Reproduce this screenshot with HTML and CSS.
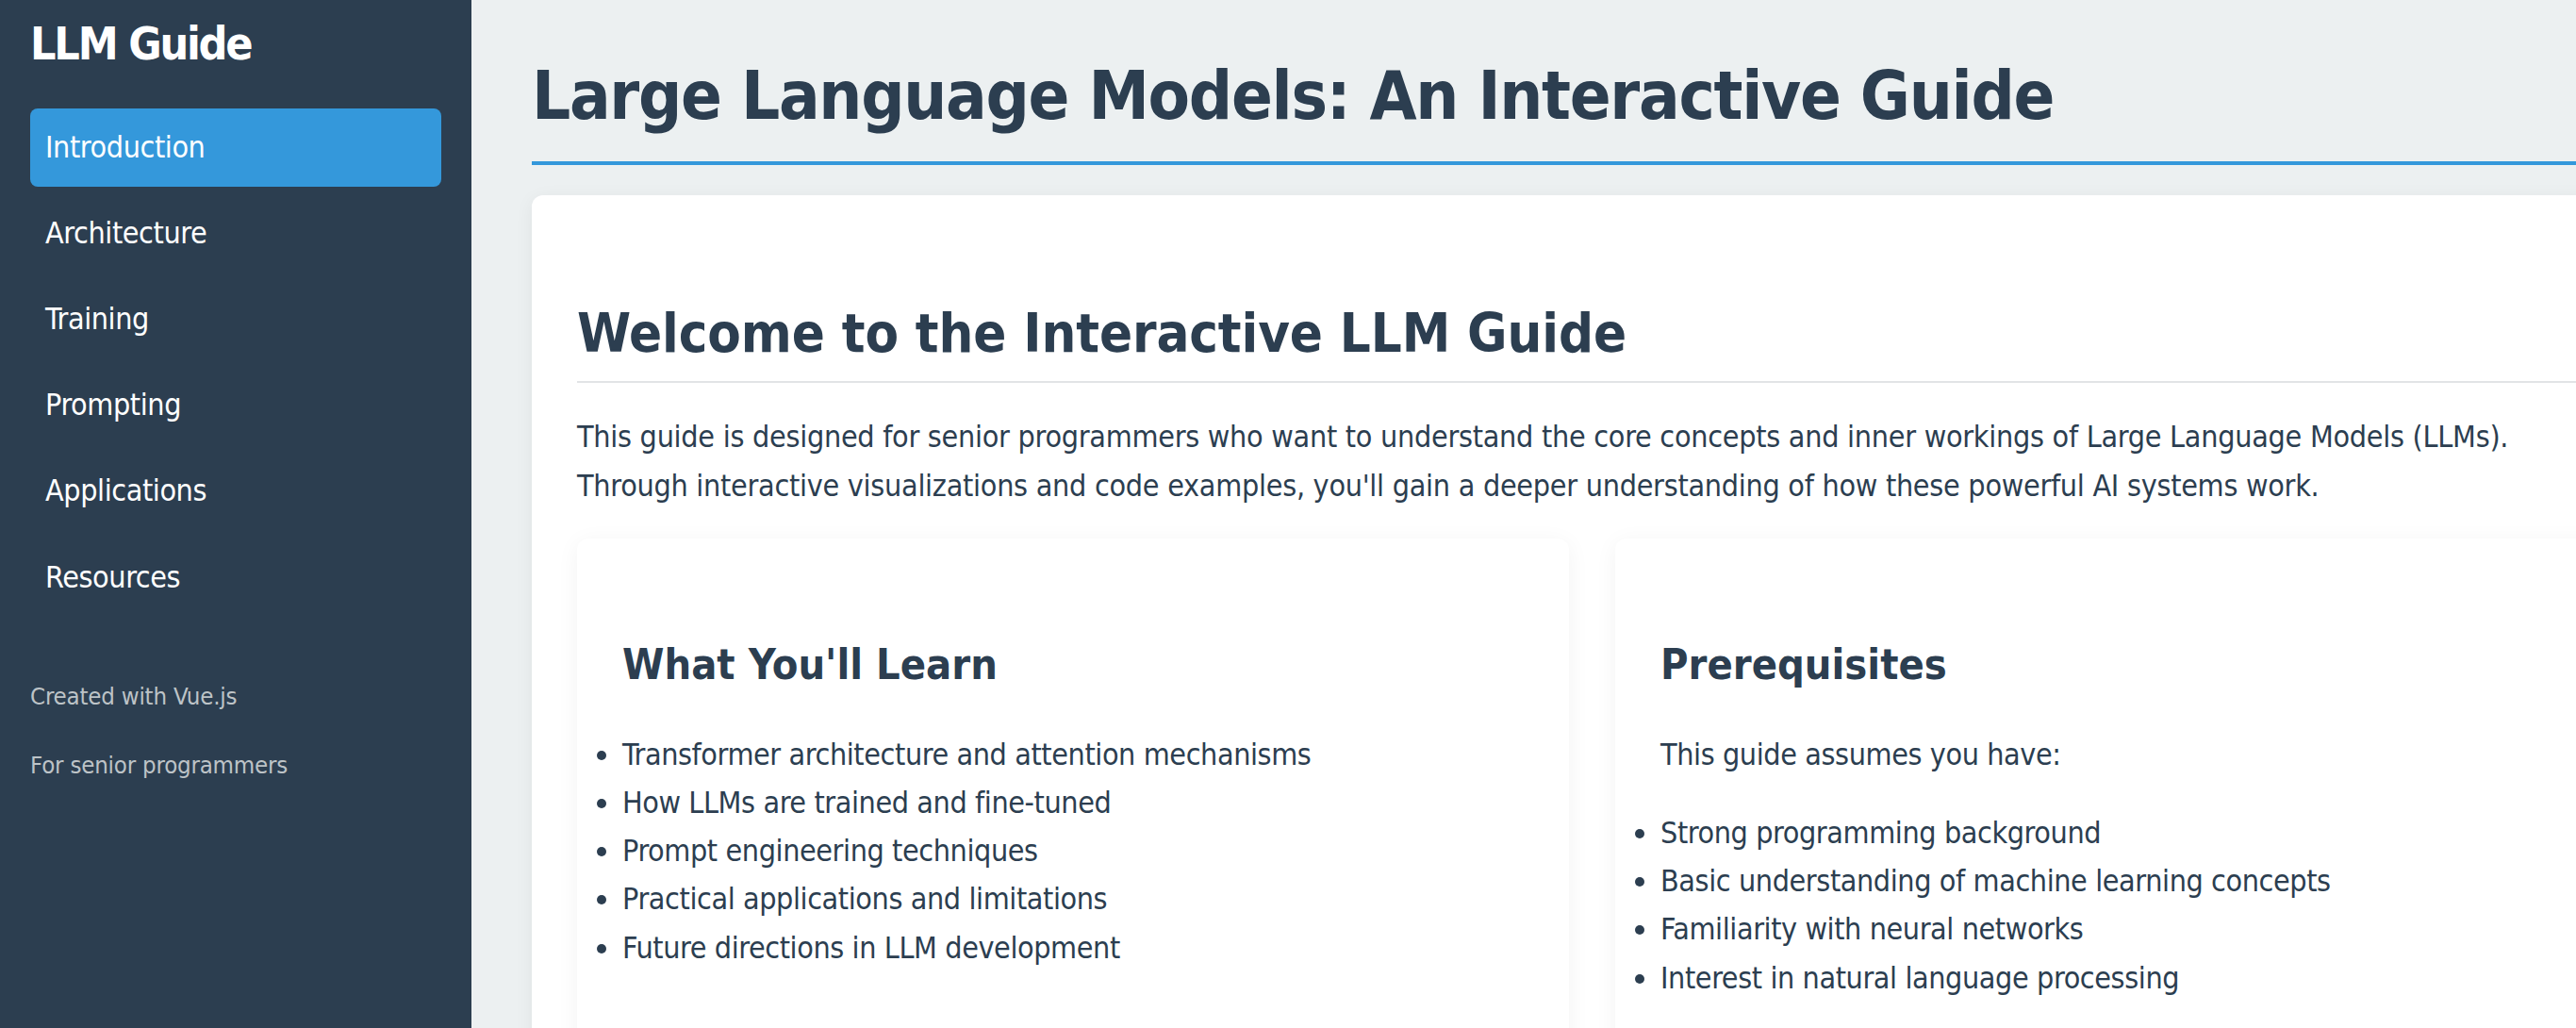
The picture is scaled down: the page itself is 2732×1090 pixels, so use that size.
FILE: index.html
```html
<!DOCTYPE html>
<html lang="en">
<head>
<meta charset="utf-8">
<title>LLM Guide</title>
<link rel="stylesheet" href="styles.css">
</head>
<body>
<div class="layout">
  <aside class="sidebar">
    <div class="logo">LLM Guide</div>
    <nav class="nav">
      <a class="nav-item active">Introduction</a>
      <a class="nav-item">Architecture</a>
      <a class="nav-item">Training</a>
      <a class="nav-item">Prompting</a>
      <a class="nav-item">Applications</a>
      <a class="nav-item">Resources</a>
    </nav>
    <div class="sidebar-footer">
      <p>Created with Vue.js</p>
      <p>For senior programmers</p>
    </div>
  </aside>
  <main class="main">
    <header class="page-header">
      <h1 class="page-title">Large Language Models: An Interactive Guide</h1>
    </header>
    <section class="section-card">
      <h2 class="section-title">Welcome to the Interactive LLM Guide</h2>
      <p class="intro">This guide is designed for senior programmers who want to understand the core concepts and inner workings of Large Language Models (LLMs). Through interactive visualizations and code examples, you'll gain a deeper understanding of how these powerful AI systems work.</p>
      <div class="feature-grid">
        <div class="feature-card">
          <h3 class="feature-title">What You'll Learn</h3>
          <ul class="feature-list">
            <li>Transformer architecture and attention mechanisms</li>
            <li>How LLMs are trained and fine-tuned</li>
            <li>Prompt engineering techniques</li>
            <li>Practical applications and limitations</li>
            <li>Future directions in LLM development</li>
          </ul>
        </div>
        <div class="feature-card">
          <h3 class="feature-title">Prerequisites</h3>
          <p class="feature-text">This guide assumes you have:</p>
          <ul class="feature-list">
            <li>Strong programming background</li>
            <li>Basic understanding of machine learning concepts</li>
            <li>Familiarity with neural networks</li>
            <li>Interest in natural language processing</li>
          </ul>
        </div>
      </div>
    </section>
  </main>
</div>
</body>
</html>
```

FILE: styles.css
```css
html, body {
  margin: 0;
  padding: 0;
  height: 100%;
  overflow: hidden;
}

body {
  font-family: "DejaVu Sans Condensed", "DejaVu Sans", sans-serif;
  color: #2c3e50;
  background: #ecf0f1;
  font-size: 32px;
  line-height: 1.6;
}

.layout {
  display: flex;
  min-height: 100vh;
}

.sidebar {
  flex: none;
  width: 500px;
  box-sizing: border-box;
  padding: 18px 32px 0;
  background: #2c3e50;
  color: #fff;
  min-height: 100vh;
}

.logo {
  font-size: 48px;
  font-weight: bold;
  line-height: 57.6px;
  letter-spacing: -2.2px;
  margin: 0 0 39px 0;
}

.nav {
  display: flex;
  flex-direction: column;
  gap: 8px;
}

.nav-item {
  display: block;
  padding: 16px;
  line-height: 51.2px;
  border-radius: 8px;
  color: #fff;
  text-decoration: none;
  letter-spacing: -0.4px;
}

.nav-item.active {
  background: #3498db;
}

.sidebar-footer {
  margin-top: 64px;
  color: #bdc3c7;
  font-size: 25.6px;
  line-height: 41px;
  letter-spacing: -0.2px;
}

.sidebar-footer p {
  margin: 0 0 32px 0;
}

.main {
  flex: none;
  width: 2249px;
  padding: 58px 64px 0 64px;
}

.page-header {
  border-bottom: 4px solid #3498db;
  padding-bottom: 27px;
  margin-bottom: 32px;
}

.page-title {
  margin: 0;
  font-size: 72px;
  line-height: 86.4px;
  font-weight: bold;
  letter-spacing: -1.3px;
}

.section-card {
  background: #fff;
  border-radius: 12px;
  padding: 48px 48px 0;
  box-shadow: 0 4px 20px rgba(0, 0, 0, 0.06);
  min-height: 1000px;
}

.section-title {
  margin: 64px 0 0 0;
  font-size: 57.6px;
  line-height: 69px;
  font-weight: bold;
  letter-spacing: -0.1px;
  padding-bottom: 16px;
  border-bottom: 2px solid #e2e4e6;
}

.intro {
  margin: 32px 0 30px 0;
  letter-spacing: -0.27px;
}

.feature-grid {
  display: grid;
  grid-template-columns: 1052px 1052px;
  gap: 49px;
}

.feature-card {
  background: #fff;
  border-radius: 12px;
  padding: 48px;
  box-shadow: 0 4px 24px rgba(0, 0, 0, 0.05);
  min-height: 600px;
}

.feature-title {
  margin: 59px 0 43px 0;
  font-size: 44.8px;
  line-height: 54px;
  font-weight: bold;
}

.feature-text {
  margin: 0 0 32px 0;
  letter-spacing: -0.4px;
}

.feature-list {
  margin: 0;
  padding: 0;
  list-style: disc outside;
  letter-spacing: -0.4px;
}
```
